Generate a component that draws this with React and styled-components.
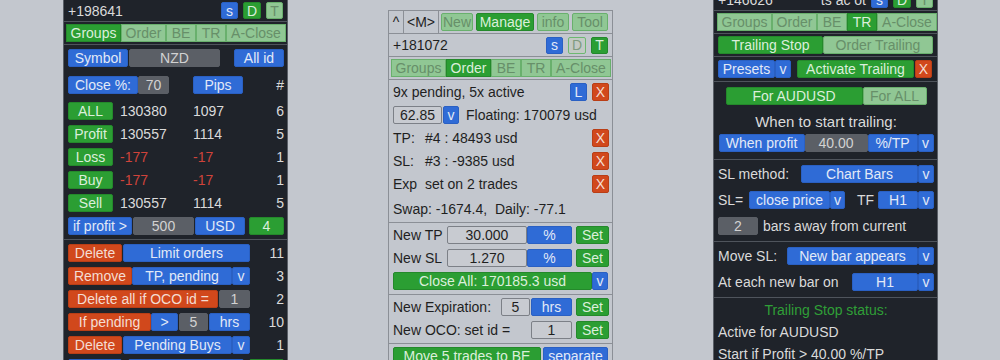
import React from 'react';
import styled, { createGlobalStyle, css } from 'styled-components';

const GlobalStyle = createGlobalStyle`
  html, body { margin: 0; padding: 0; background: #c3c7ce; overflow: hidden; }
  body { font-family: "Liberation Sans", Arial, sans-serif; font-size: 14px; }
  #root { height: 360px; overflow: hidden; }
`;

const Page = styled.div`
  display: flex;
  align-items: flex-start;
  gap: 100px;
  padding-left: 63px;
  height: 360px;
  overflow: hidden;
`;

const Panel = styled.div`
  --sep: ${p => (p.$light ? '#8b8f96' : '#4f545c')};
  flex: none;
  width: 225px;
  box-sizing: border-box;
  margin-top: ${p => p.$top}px;
  border: 1px solid ${p => (p.$light ? '#8b8f96' : '#5a5f67')};
  background: ${p => (p.$light ? '#c3c7ce' : '#1f232a')};
  color: ${p => (p.$light ? '#1f1f1f' : '#dadada')};
`;

const Header = styled.div`
  display: flex;
  align-items: center;
  gap: 5px;
  height: ${p => p.$h}px;
  padding: 0 4px;
  border-bottom: 1px solid var(--sep);
`;

const Title = styled.span`
  margin-right: auto;
  white-space: nowrap;
`;

const NavRow = styled.div`
  display: flex;
  align-items: center;
  height: 22px;
  border-bottom: 1px solid var(--sep);
`;

const NavCell = styled.div`
  box-sizing: border-box;
  width: ${p => p.$w}px;
  height: 100%;
  display: flex;
  align-items: center;
  justify-content: center;
  border-right: 1px solid var(--sep);
`;

const NavBtns = styled.div`
  display: flex;
  gap: 3px;
  margin-left: 2px;
`;

const TabBar = styled.div`
  display: flex;
  padding: 2px 1px 2px ${p => p.$pl ?? 2}px;
  border-bottom: 1px solid var(--sep);
`;

const Body = styled.div`
  display: flex;
  flex-direction: column;
  gap: ${p => p.$gap ?? 5}px;
  padding: ${p => p.$pt ?? 3}px 3px ${p => p.$pb ?? 3}px 4px;
  border-bottom: ${p => (p.$last ? 'none' : '1px solid var(--sep)')};
`;

const Row = styled.div`
  flex: none;
  display: flex;
  align-items: center;
  height: ${p => p.$h ?? 18}px;
  margin-top: ${p => p.$mt ?? 0}px;
  justify-content: ${p => (p.$center ? 'center' : 'flex-start')};
  white-space: nowrap;
`;

const variants = {
  blue: css`background: #2f6bd6; border-color: #2a60c3; color: #e2e9f7;`,
  green: css`background: #2b9e33; border-color: #24892b; color: #dbefdb;`,
  orange: css`background: #d1481c; border-color: #b93e16; color: #f4ddd3;`,
  lite: css`background: #90c794; border-color: #69b06d; color: #678f69;`,
  ghost: css`background: #c3cac5; border-color: #6db871; color: #7f9b80;`,
  gray: css`background: #5b5f66; border-color: #5b5f66; color: #d2d2d2;`,
  input: css`background: #c8cbd1; border-color: #7c8087; color: #1f1f1f;`,
};

const ml = v => (v === undefined ? '0' : typeof v === 'number' ? `${v}px` : v);

const Btn = styled.div`
  box-sizing: border-box;
  flex: none;
  width: ${p => p.$w}px;
  height: ${p => p.$h ?? 18}px;
  margin-left: ${p => ml(p.$ml)};
  display: flex;
  align-items: center;
  justify-content: center;
  border: 1px solid;
  border-radius: ${p => p.$r ?? 2}px;
  font-size: 14px;
  white-space: nowrap;
  overflow: hidden;
  ${p => variants[p.$v]}
`;

const Txt = styled.span`
  flex: none;
  margin-left: ${p => ml(p.$ml)};
  width: ${p => (p.$w ? `${p.$w}px` : 'auto')};
  white-space: pre;
  color: ${p => (p.$neg ? '#d0433b' : 'inherit')};
`;

const Count = styled.span`
  margin-left: auto;
`;

const Heading = styled.span`
  font-size: 15px;
`;

const Status = styled.span`
  color: ${p => (p.$green ? '#2f9f37' : 'inherit')};
`;

function HeadBtns({ mid }) {
  return (
    <>
      <Btn $v="blue" $w={17} $h={17}>s</Btn>
      <Btn $v={mid ? 'ghost' : 'green'} $w={18} $h={17}>D</Btn>
      <Btn $v={mid ? 'green' : 'lite'} $w={17} $h={17}>T</Btn>
    </>
  );
}

function Tabs({ active, pl }) {
  const items = [['Groups', 55], ['Order', 45], ['BE', 30], ['TR', 30], ['A-Close', 60]];
  return (
    <TabBar $pl={pl}>
      {items.map(([t, w]) => (
        <Btn key={t} $v={t === active ? 'green' : 'lite'} $w={w} $r={0}>{t}</Btn>
      ))}
    </TabBar>
  );
}

function LeftPanel() {
  const stats = [
    ['ALL', '130380', '1097', '6'],
    ['Profit', '130557', '1114', '5'],
    ['Loss', '-177', '-17', '1'],
    ['Buy', '-177', '-17', '1'],
    ['Sell', '130557', '1114', '5'],
  ];
  return (
    <Panel $top={-1}>
      <Header $h={21}>
        <Title>+198641</Title>
        <HeadBtns />
      </Header>
      <Tabs active="Groups" />
      <Body $pt={4} $pb={4}>
        <Row>
          <Btn $v="blue" $w={60}>Symbol</Btn>
          <Btn $v="gray" $w={91} $ml={1}>NZD</Btn>
          <Btn $v="blue" $w={50} $ml="auto">All id</Btn>
        </Row>
        <Row $mt={4}>
          <Btn $v="blue" $w={70}>Close %:</Btn>
          <Btn $v="gray" $w={31}>70</Btn>
          <Btn $v="blue" $w={50} $ml={24}>Pips</Btn>
          <Count>#</Count>
        </Row>
        {stats.map(([label, a, b, n], i) => (
          <Row key={label} $mt={i === 0 ? 3 : 0}>
            <Btn $v="green" $w={45}>{label}</Btn>
            <Txt $ml={7} $w={73} $neg={a.startsWith('-')}>{a}</Txt>
            <Txt $w={60} $neg={b.startsWith('-')}>{b}</Txt>
            <Count>{n}</Count>
          </Row>
        ))}
        <Row>
          <Btn $v="blue" $w={64}>if profit &gt;</Btn>
          <Btn $v="gray" $w={61} $ml={1}>500</Btn>
          <Btn $v="blue" $w={50} $ml={1}>USD</Btn>
          <Btn $v="green" $w={35} $ml="auto">4</Btn>
        </Row>
      </Body>
      <Body $pt={4} $last>
        <Row>
          <Btn $v="orange" $w={54}>Delete</Btn>
          <Btn $v="blue" $w={127} $ml={1}>Limit orders</Btn>
          <Count>11</Count>
        </Row>
        <Row>
          <Btn $v="orange" $w={64}>Remove</Btn>
          <Btn $v="blue" $w={100}>TP, pending</Btn>
          <Btn $v="blue" $w={18}>v</Btn>
          <Count>3</Count>
        </Row>
        <Row>
          <Btn $v="orange" $w={150}>Delete all if OCO id =</Btn>
          <Btn $v="gray" $w={31} $ml={1}>1</Btn>
          <Count>2</Count>
        </Row>
        <Row>
          <Btn $v="orange" $w={83}>If pending</Btn>
          <Btn $v="blue" $w={27}>&gt;</Btn>
          <Btn $v="gray" $w={29} $ml={1}>5</Btn>
          <Btn $v="blue" $w={41} $ml={1}>hrs</Btn>
          <Count>10</Count>
        </Row>
        <Row>
          <Btn $v="orange" $w={54}>Delete</Btn>
          <Btn $v="blue" $w={109} $ml={1}>Pending Buys</Btn>
          <Btn $v="blue" $w={18}>v</Btn>
          <Count>1</Count>
        </Row>
        <Row>
          <Btn $v="blue" $w={54} />
          <Btn $v="blue" $w={116} $ml={6} />
          <Btn $v="green" $w={35} $ml="auto" />
        </Row>
      </Body>
    </Panel>
  );
}

function MiddlePanel() {
  return (
    <Panel $top={10} $light>
      <NavRow>
        <NavCell $w={15}>^</NavCell>
        <NavCell $w={35}>&lt;M&gt;</NavCell>
        <NavBtns>
          <Btn $v="lite" $w={32}>New</Btn>
          <Btn $v="green" $w={58}>Manage</Btn>
          <Btn $v="lite" $w={32}>info</Btn>
          <Btn $v="lite" $w={36}>Tool</Btn>
        </NavBtns>
      </NavRow>
      <Header $h={22}>
        <Title>+181072</Title>
        <HeadBtns mid />
      </Header>
      <Tabs active="Order" />
      <Body $pt={3} $pb={3}>
        <Row>
          <Txt>9x pending, 5x active</Txt>
          <Btn $v="blue" $w={17} $ml="auto">L</Btn>
          <Btn $v="orange" $w={17} $ml={5}>X</Btn>
        </Row>
        <Row>
          <Btn $v="input" $w={49}>62.85</Btn>
          <Btn $v="blue" $w={16} $ml={1}>v</Btn>
          <Txt $ml={7}>Floating: 170079 usd</Txt>
        </Row>
        <Row>
          <Txt $w={32}>TP:</Txt>
          <Txt>#4 : 48493 usd</Txt>
          <Btn $v="orange" $w={17} $ml="auto">X</Btn>
        </Row>
        <Row>
          <Txt $w={32}>SL:</Txt>
          <Txt>#3 : -9385 usd</Txt>
          <Btn $v="orange" $w={17} $ml="auto">X</Btn>
        </Row>
        <Row>
          <Txt $w={32}>Exp</Txt>
          <Txt>set on 2 trades</Txt>
          <Btn $v="orange" $w={17} $ml="auto">X</Btn>
        </Row>
        <Row $h={21}>
          <Txt>{'Swap: -1674.4,  Daily: -77.1'}</Txt>
        </Row>
      </Body>
      <Body $pt={3} $pb={4}>
        <Row>
          <Txt>New TP</Txt>
          <Btn $v="input" $w={80} $ml="auto">30.000</Btn>
          <Btn $v="blue" $w={45}>%</Btn>
          <Btn $v="green" $w={33} $ml={4}>Set</Btn>
        </Row>
        <Row>
          <Txt>New SL</Txt>
          <Btn $v="input" $w={80} $ml="auto">1.270</Btn>
          <Btn $v="blue" $w={45}>%</Btn>
          <Btn $v="green" $w={33} $ml={4}>Set</Btn>
        </Row>
        <Row>
          <Btn $v="green" $w={199}>Close All: 170185.3 usd</Btn>
          <Btn $v="blue" $w={16}>v</Btn>
        </Row>
      </Body>
      <Body $pt={3} $pb={4}>
        <Row>
          <Txt>New Expiration:</Txt>
          <Btn $v="input" $w={29} $ml="auto">5</Btn>
          <Btn $v="blue" $w={41} $ml={1}>hrs</Btn>
          <Btn $v="green" $w={33} $ml={4}>Set</Btn>
        </Row>
        <Row>
          <Txt>New OCO: set id =</Txt>
          <Btn $v="input" $w={41} $ml="auto">1</Btn>
          <Btn $v="green" $w={33} $ml={4}>Set</Btn>
        </Row>
      </Body>
      <Body $pt={3} $last>
        <Row>
          <Btn $v="green" $w={148}>Move 5 trades to BE</Btn>
          <Btn $v="blue" $w={65} $ml={2}>separate</Btn>
        </Row>
      </Body>
    </Panel>
  );
}

function RightPanel() {
  return (
    <Panel $top={-12}>
      <Header $h={21}>
        <Title>+146626</Title>
        <Txt>ts ac ot</Txt>
        <HeadBtns />
      </Header>
      <Tabs active="TR" pl={3} />
      <Body $pt={2} $pb={2}>
        <Row>
          <Btn $v="green" $w={105}>Trailing Stop</Btn>
          <Btn $v="lite" $w={110}>Order Trailing</Btn>
        </Row>
      </Body>
      <Body $pt={3} $pb={3}>
        <Row>
          <Btn $v="blue" $w={57}>Presets</Btn>
          <Btn $v="blue" $w={16}>v</Btn>
          <Btn $v="green" $w={117} $ml={6}>Activate Trailing</Btn>
          <Btn $v="orange" $w={17} $ml={1}>X</Btn>
        </Row>
      </Body>
      <Body $pt={5} $pb={7} $gap={0}>
        <Row $center>
          <Btn $v="green" $w={137}>For AUDUSD</Btn>
          <Btn $v="lite" $w={64}>For ALL</Btn>
        </Row>
        <Row $center $h={20} $mt={6}>
          <Heading>When to start trailing:</Heading>
        </Row>
        <Row $center $mt={3}>
          <Btn $v="blue" $w={86}>When profit</Btn>
          <Btn $v="gray" $w={63}>40.00</Btn>
          <Btn $v="blue" $w={50}>%/TP</Btn>
          <Btn $v="blue" $w={16}>v</Btn>
        </Row>
      </Body>
      <Body $pt={5} $pb={6} $gap={8}>
        <Row>
          <Txt>SL method:</Txt>
          <Btn $v="blue" $w={117} $ml="auto">Chart Bars</Btn>
          <Btn $v="blue" $w={16}>v</Btn>
        </Row>
        <Row>
          <Txt $w={31}>SL=</Txt>
          <Btn $v="blue" $w={81}>close price</Btn>
          <Btn $v="blue" $w={15}>v</Btn>
          <Txt $ml={12}>TF</Txt>
          <Btn $v="blue" $w={40} $ml="auto">H1</Btn>
          <Btn $v="blue" $w={16}>v</Btn>
        </Row>
        <Row>
          <Btn $v="gray" $w={40}>2</Btn>
          <Txt $ml={5}>bars away from current</Txt>
        </Row>
      </Body>
      <Body $pt={5} $pb={6} $gap={8}>
        <Row>
          <Txt>Move SL:</Txt>
          <Btn $v="blue" $w={131} $ml="auto">New bar appears</Btn>
          <Btn $v="blue" $w={16}>v</Btn>
        </Row>
        <Row>
          <Txt>At each new bar on</Txt>
          <Btn $v="blue" $w={66} $ml="auto">H1</Btn>
          <Btn $v="blue" $w={16}>v</Btn>
        </Row>
      </Body>
      <Body $pt={1} $gap={0} $last>
        <Row $h={22} $center>
          <Status $green>Trailing Stop status:</Status>
        </Row>
        <Row $h={22}>
          <Status>Active for AUDUSD</Status>
        </Row>
        <Row $h={22}>
          <Status>Start if Profit &gt; 40.00 %/TP</Status>
        </Row>
      </Body>
    </Panel>
  );
}

export default function App() {
  return (
    <>
      <GlobalStyle />
      <Page>
        <LeftPanel />
        <MiddlePanel />
        <RightPanel />
      </Page>
    </>
  );
}
